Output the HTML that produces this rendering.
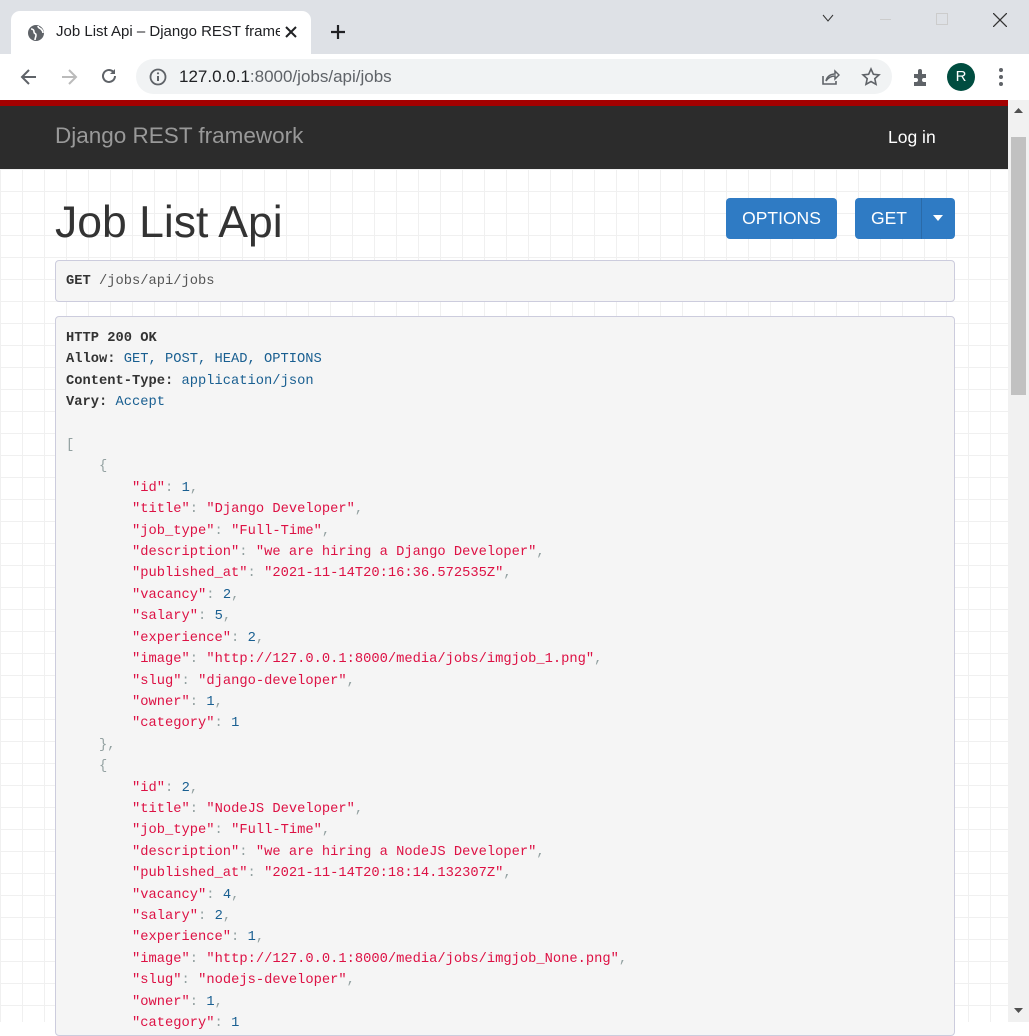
<!DOCTYPE html>
<html><head><meta charset="utf-8"><style>
*{margin:0;padding:0;box-sizing:border-box}
body{width:1029px;height:1022px;overflow:hidden;background:#fff;font-family:"Liberation Sans",sans-serif;position:relative}
.tabbar{position:absolute;left:0;top:0;width:1029px;height:54px;background:#dee1e6}
.tab{position:absolute;left:11px;top:11px;width:300px;height:43px;background:#fff;border-radius:9px 9px 0 0}
.tab .t{position:absolute;left:45px;top:12px;font-size:15px;color:#202124;white-space:nowrap;width:224px;overflow:hidden}
.toolbar{position:absolute;left:0;top:54px;width:1029px;height:46px;background:#fff}
.omni{position:absolute;left:136px;top:5px;height:35px;background:#f1f3f4;border-radius:18px;width:756px}
.url{position:absolute;left:43px;top:8px;font-size:17px;color:#5f6368}
.url b{font-weight:normal;color:#202124}
.red{position:absolute;left:0;top:100px;width:1008px;height:6px;background:#a30000}
.nav{position:absolute;left:0;top:106px;width:1008px;height:63px;background:#2c2c2c}
.brand{position:absolute;left:55px;top:17px;font-size:22.5px;color:#999}
.login{position:absolute;left:888px;top:21px;font-size:17.5px;color:#fff}
.main{position:absolute;left:0;top:169px;width:1008px;height:853px;background-color:#fff;background-image:linear-gradient(#f0f0f0 1px,transparent 1px),linear-gradient(90deg,#f0f0f0 1px,transparent 1px);background-size:22px 22px}
h1{position:absolute;left:55px;top:29px;font-size:44.5px;font-weight:normal;color:#333}
.btn{position:absolute;top:29px;height:41px;background:#2f7bc4;border-radius:4px;color:#fff;font-size:17.5px;line-height:41px;text-align:center}
.panel{position:absolute;left:55px;width:900px;background:#f5f5f5;border:1px solid #ccd;border-radius:4px;font-family:"Liberation Mono",monospace;font-size:13.75px;color:#333}
pre{font-family:inherit;font-size:inherit;line-height:21.4px;white-space:pre}
.s{color:#d14}.n{color:#195f91}.p{color:#93a1a1}.h{color:#195f91}
.sb{position:absolute;left:1008px;top:100px;width:21px;height:922px;background:#f1f1f1}
.thumb{position:absolute;left:3px;top:37px;width:15px;height:258px;background:#c1c1c1}
</style></head><body>
<div class="tabbar">
 <div class="tab">
  <svg style="position:absolute;left:16px;top:13px" width="18" height="18" viewBox="0 0 18 18"><circle cx="9" cy="9" r="8" fill="#5f6368"/><path d="M4 5c2 0 3 1 3 3s2 1 2 3-1 3-1 5M11 2c0 2 2 2 3 3s2 3 2 4" stroke="#fff" stroke-width="1.6" fill="none"/></svg>
  <div class="t">Job List Api – Django REST framework</div>
  <svg style="position:absolute;left:274px;top:15px" width="12" height="12"><path d="M1 1l10 10M11 1L1 11" stroke="#202124" stroke-width="2"/></svg>
 </div>
 <svg style="position:absolute;left:330px;top:24px" width="16" height="16"><path d="M8 1v14M1 8h14" stroke="#202124" stroke-width="2.2"/></svg>
 <svg style="position:absolute;left:822px;top:14px" width="14" height="10"><path d="M1 1l5 6 5-6" stroke="#333" stroke-width="1" fill="none"/></svg>
 <div style="position:absolute;left:880px;top:19px;width:11px;border-top:1px solid #ccc"></div>
 <div style="position:absolute;left:936px;top:13px;width:12px;height:12px;border:1px solid #ccc"></div>
 <svg style="position:absolute;left:993px;top:13px" width="14" height="14"><path d="M0 0l14 14M14 0L0 14" stroke="#333" stroke-width="1.3"/></svg>
</div>
<div class="toolbar">
 <svg style="position:absolute;left:19px;top:13px" width="20" height="20"><path d="M17 10H3M10 3L3 10l7 7" stroke="#5f6368" stroke-width="2" fill="none"/></svg>
 <svg style="position:absolute;left:59px;top:13px" width="20" height="20"><path d="M3 10h14M10 3l7 7-7 7" stroke="#bbb" stroke-width="2" fill="none"/></svg>
 <svg style="position:absolute;left:99px;top:12px" width="20" height="20"><path d="M16 10a6 6 0 1 1-2-4.5" stroke="#5f6368" stroke-width="2" fill="none"/><path d="M16 3v5h-5z" fill="#5f6368"/></svg>
 <div class="omni">
  <svg style="position:absolute;left:13px;top:9px" width="18" height="18"><circle cx="9" cy="9" r="7.5" stroke="#5f6368" stroke-width="1.8" fill="none"/><path d="M9 8v5" stroke="#5f6368" stroke-width="2"/><circle cx="9" cy="5.3" r="1.1" fill="#5f6368"/></svg>
  <div class="url"><b>127.0.0.1</b>:8000/jobs/api/jobs</div>
  <svg style="position:absolute;left:684px;top:8px" width="20" height="20"><path d="M3 9v8h13v-3" stroke="#5f6368" stroke-width="1.6" fill="none"/><path d="M6 14c1-5 5-7 9-7V4l4 4-4 4V9c-4 0-7 2-9 5z" stroke="#5f6368" stroke-width="1.5" fill="none"/></svg>
  <svg style="position:absolute;left:725px;top:8px" width="20" height="20"><path d="M10 2l2.4 5.3 5.6.6-4.2 3.8 1.2 5.6L10 14.5 5 17.3l1.2-5.6L2 7.9l5.6-.6z" stroke="#5f6368" stroke-width="1.6" fill="none"/></svg>
 </div>
 <svg style="position:absolute;left:911px;top:13px" width="20" height="20"><path d="M3 7h4V4a2 2 0 0 1 4 0v3h4v4h-2a2 2 0 0 0 0 4h2v4H3v-4h2a2 2 0 0 0 0-4H3z" fill="#5f6368"/></svg>
 <div style="position:absolute;left:947px;top:9px;width:28px;height:28px;border-radius:50%;background:#004d40;color:#fff;font-size:15px;text-align:center;line-height:28px">R</div>
 <svg style="position:absolute;left:997px;top:12px" width="8" height="22"><circle cx="4" cy="4" r="2" fill="#5f6368"/><circle cx="4" cy="11" r="2" fill="#5f6368"/><circle cx="4" cy="18" r="2" fill="#5f6368"/></svg>
</div>
<div class="red"></div>
<div class="nav"><div class="brand">Django REST framework</div><div class="login">Log in</div></div>
<div class="main">
 <h1>Job List Api</h1>
 <div class="btn" style="left:726px;width:111px">OPTIONS</div>
 <div class="btn" style="left:855px;width:100px;text-align:left;padding-left:16px">GET<span style="position:absolute;left:66px;top:0;height:41px;border-left:1px solid #2a6aa8"></span><svg style="position:absolute;left:78px;top:17px" width="10" height="6"><path d="M0 0h10L5 6z" fill="#fff"/></svg></div>
 <div class="panel" style="top:91px;height:42px;padding:10px"><pre><b>GET</b> <span style="color:#555">/jobs/api/jobs</span></pre></div>
 <div class="panel" style="top:147px;height:720px;padding:11px 10px 10px"><pre><b>HTTP 200 OK</b>
<b>Allow:</b> <span class="h">GET, POST, HEAD, OPTIONS</span>
<b>Content-Type:</b> <span class="h">application/json</span>
<b>Vary:</b> <span class="h">Accept</span>

<span class="p">[</span>
    <span class="p">{</span>
        <span class="s">"id"</span><span class="p">:</span> <span class="n">1</span><span class="p">,</span>
        <span class="s">"title"</span><span class="p">:</span> <span class="s">"Django Developer"</span><span class="p">,</span>
        <span class="s">"job_type"</span><span class="p">:</span> <span class="s">"Full-Time"</span><span class="p">,</span>
        <span class="s">"description"</span><span class="p">:</span> <span class="s">"we are hiring a Django Developer"</span><span class="p">,</span>
        <span class="s">"published_at"</span><span class="p">:</span> <span class="s">"2021-11-14T20:16:36.572535Z"</span><span class="p">,</span>
        <span class="s">"vacancy"</span><span class="p">:</span> <span class="n">2</span><span class="p">,</span>
        <span class="s">"salary"</span><span class="p">:</span> <span class="n">5</span><span class="p">,</span>
        <span class="s">"experience"</span><span class="p">:</span> <span class="n">2</span><span class="p">,</span>
        <span class="s">"image"</span><span class="p">:</span> <span class="s">"http://127.0.0.1:8000/media/jobs/imgjob_1.png"</span><span class="p">,</span>
        <span class="s">"slug"</span><span class="p">:</span> <span class="s">"django-developer"</span><span class="p">,</span>
        <span class="s">"owner"</span><span class="p">:</span> <span class="n">1</span><span class="p">,</span>
        <span class="s">"category"</span><span class="p">:</span> <span class="n">1</span>
    <span class="p">},</span>
    <span class="p">{</span>
        <span class="s">"id"</span><span class="p">:</span> <span class="n">2</span><span class="p">,</span>
        <span class="s">"title"</span><span class="p">:</span> <span class="s">"NodeJS Developer"</span><span class="p">,</span>
        <span class="s">"job_type"</span><span class="p">:</span> <span class="s">"Full-Time"</span><span class="p">,</span>
        <span class="s">"description"</span><span class="p">:</span> <span class="s">"we are hiring a NodeJS Developer"</span><span class="p">,</span>
        <span class="s">"published_at"</span><span class="p">:</span> <span class="s">"2021-11-14T20:18:14.132307Z"</span><span class="p">,</span>
        <span class="s">"vacancy"</span><span class="p">:</span> <span class="n">4</span><span class="p">,</span>
        <span class="s">"salary"</span><span class="p">:</span> <span class="n">2</span><span class="p">,</span>
        <span class="s">"experience"</span><span class="p">:</span> <span class="n">1</span><span class="p">,</span>
        <span class="s">"image"</span><span class="p">:</span> <span class="s">"http://127.0.0.1:8000/media/jobs/imgjob_None.png"</span><span class="p">,</span>
        <span class="s">"slug"</span><span class="p">:</span> <span class="s">"nodejs-developer"</span><span class="p">,</span>
        <span class="s">"owner"</span><span class="p">:</span> <span class="n">1</span><span class="p">,</span>
        <span class="s">"category"</span><span class="p">:</span> <span class="n">1</span></pre></div>
</div>
<div class="sb"><div class="thumb"></div>
 <svg style="position:absolute;left:6px;top:8px" width="9" height="5"><path d="M0 5h9L4.5 0z" fill="#505050"/></svg>
 <svg style="position:absolute;left:6px;top:908px" width="9" height="5"><path d="M0 0h9L4.5 5z" fill="#505050"/></svg>
</div>
</body></html>
